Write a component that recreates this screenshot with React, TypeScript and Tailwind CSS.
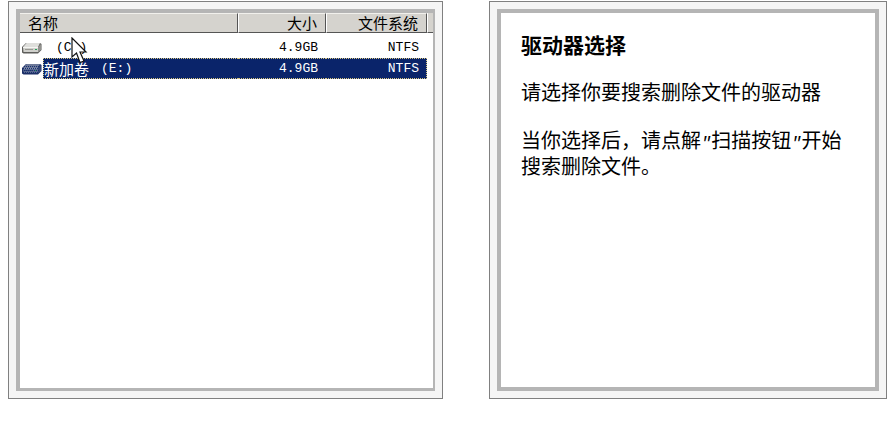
interface Drive {
    id: string;
    label?: string;
    letter: string;
    size: string;
    fileSystem: string;
    selected: boolean;
}

const drives: Drive[] = [
    { id: "c", letter: "(C:)", size: "4.9GB", fileSystem: "NTFS", selected: false },
    { id: "e", label: "新加卷", letter: "(E:)", size: "4.9GB", fileSystem: "NTFS", selected: true },
];

const DriveIcon: React.FC<{ selected: boolean }> = ({ selected }) => {
    const top = selected ? "#6c7898" : "#dededb";
    const front = selected ? "#59688f" : "#d0d0cc";
    const edge = selected ? "#1c2f66" : "#5d5d5a";
    return (
        <svg width="22" height="14" viewBox="0 0 22 14" className="shrink-0" aria-hidden="true">
            <path d="M2 6 L6 2 H20 L21.500 3 V9 L18 12.500 H3.500 L2 11.500 Z" fill={edge} />
            <path d="M3 6 L6.500 2 H20 L18 6 Z" fill={top} />
            <path d="M3 6 H18 V11 H3.500 Z" fill={front} />
            <path d="M18 6 L21 3 V8.500 L18 11.500 Z" fill={selected ? "#344676" : "#92928e"} />
            <path d="M3 6.500 H18" stroke={selected ? "#8590ae" : "#f5f5f2"} />
            <path d="M5 8.500 H13" stroke={selected ? "#36477a" : "#989892"} />
            <rect x="15" y="8" width="2" height="1" fill="#28a05a" />
            {selected && (
                <path
                    d="M4 4.500 H20 M3 6.500 H19 M4 8.500 H20 M3 10.500 H19"
                    stroke="#16306f"
                    strokeDasharray="1 1"
                />
            )}
        </svg>
    );
};

const Pointer = () => (
    <svg
        width="17"
        height="28"
        viewBox="0 0 17 28"
        className="pointer-events-none absolute top-6 left-[51px]"
        aria-hidden="true"
    >
        <path
            d="M1 1 V20 L5.500 16 L9 25.500 L13 24 L9 15 H15 Z"
            fill="#ffffff"
            stroke="#111111"
            strokeWidth="1.200"
        />
    </svg>
);

const headCell =
    "h-5 border-t border-r border-b border-t-[#f1f0ec] border-r-[#555555] border-b-[#555555] bg-[#d5d3ce] p-0 text-[15px] leading-4 font-normal";

const DriveTable = () => (
    <div className="relative">
        <table className="w-full table-fixed border-separate border-spacing-0 text-black">
            <colgroup>
                <col />
                <col className="w-[88px]" />
                <col className="w-[101px]" />
                <col className="w-1.5" />
            </colgroup>
            <thead>
                <tr>
                    <th className={`${headCell} pl-2 text-left`}>名称</th>
                    <th className={`${headCell} border-l border-l-white pr-2 text-right`}>大小</th>
                    <th className={`${headCell} border-l border-l-white pr-2 text-right`}>文件系统</th>
                    <td className="border-b border-l border-b-[#555555] border-l-white bg-[#d5d3ce] p-0" />
                </tr>
                <tr>
                    <td colSpan={4} className="h-1 p-0" />
                </tr>
            </thead>
            <tbody>
                {drives.map((drive) => {
                    const fill = drive.selected
                        ? "border-dotted border-[#d8c680] bg-[#0a246a] text-white"
                        : "border-transparent";
                    const cell = `h-[21px] border-y p-0 text-right font-['Liberation_Mono',monospace] text-[13px] leading-4 ${fill}`;
                    return (
                        <tr key={drive.id} aria-selected={drive.selected}>
                            <td className="p-0">
                                <div className="flex items-center gap-px">
                                    <DriveIcon selected={drive.selected} />
                                    <div className={`flex h-[21px] flex-1 items-center border-y border-l ${fill}`}>
                                        {drive.label && (
                                            <span className="text-[15px] leading-4">{drive.label}</span>
                                        )}
                                        <span className="ml-3 font-['Liberation_Mono',monospace] text-[13px] leading-4">
                                            {drive.letter}
                                        </span>
                                    </div>
                                </div>
                            </td>
                            <td className={`${cell} pr-2`}>{drive.size}</td>
                            <td className={`${cell} border-r pr-[7px]`}>{drive.fileSystem}</td>
                            <td className="p-0" />
                        </tr>
                    );
                })}
            </tbody>
        </table>
        <Pointer />
    </div>
);

interface PanelProps {
    frame: string;
    children: React.ReactNode;
}

const Panel: React.FC<PanelProps> = ({ frame, children }) => (
    <section className="flex min-h-[398px] min-w-0 border border-[#808080] bg-[#f5f5f5] p-[7px]">
        <div className={`min-w-0 flex-1 border-[#b5b5b5] bg-white ${frame}`}>{children}</div>
    </section>
);

const Quote = () => (
    <i className="font-['Liberation_Mono',monospace] text-[17px] leading-none">"</i>
);

const App = () => {
    return (
        <main className="grid grid-cols-[435fr_398fr] gap-[46px] bg-white pt-px pr-1 pl-2 font-['Noto_Sans_CJK_SC',sans-serif] text-black">
            <Panel frame="border-t-4 border-r-2 border-b-[3px] border-l-4">
                <DriveTable />
            </Panel>
            <Panel frame="border-4">
                <div className="flex flex-col gap-[22px] px-5 pt-[18px] text-[20px] leading-[26px]">
                    <h1 className="text-[21px] font-bold">驱动器选择</h1>
                    <p>请选择你要搜索删除文件的驱动器</p>
                    <p>
                        当你选择后，请点解
                        <Quote />
                        扫描按钮
                        <Quote />
                        开始搜索删除文件。
                    </p>
                </div>
            </Panel>
        </main>
    );
};

export default App;
